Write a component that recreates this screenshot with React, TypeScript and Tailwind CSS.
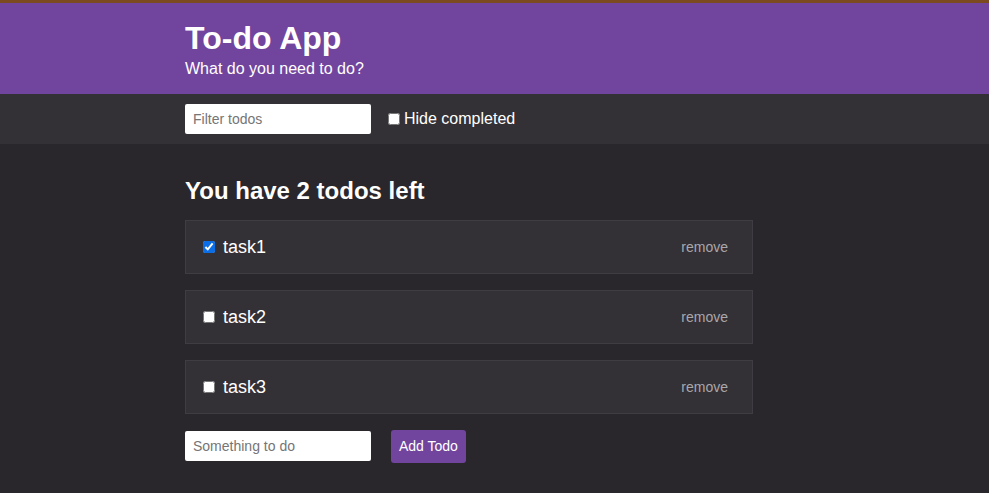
import React, { useState } from 'react';

type Todo = { id: number; text: string; done: boolean };

export default function App() {
  const [todos, setTodos] = useState<Todo[]>([
    { id: 1, text: 'task1', done: true },
    { id: 2, text: 'task2', done: false },
    { id: 3, text: 'task3', done: false },
  ]);
  const [filter, setFilter] = useState('');
  const [hideCompleted, setHideCompleted] = useState(false);
  const [draft, setDraft] = useState('');

  const left = todos.filter(t => !t.done).length;
  const visible = todos.filter(
    t => t.text.includes(filter) && !(hideCompleted && t.done)
  );

  const addTodo = () => {
    if (!draft.trim()) return;
    setTodos([...todos, { id: Date.now(), text: draft, done: false }]);
    setDraft('');
  };

  return (
    <div className="min-h-[493px] bg-[#2a272c] font-['Liberation_Sans',Arial,sans-serif] text-white">
      {/* Header */}
      <div className="border-t-[3px] border-[#7b4a1e] bg-[#71449e] h-[94px]">
        <div className="pl-[185px] pt-[15px]">
          <h1 className="text-[32px] font-bold leading-[40px]">To-do App</h1>
          <p className="text-[16px] leading-[20px] mt-[1px]">What do you need to do?</p>
        </div>
      </div>

      {/* Toolbar */}
      <div className="bg-[#343136] h-[50px] flex items-center pl-[185px] gap-[17px]">
        <input
          className="w-[186px] h-[30px] bg-white rounded-[2px] px-[8px] text-[14px] text-black placeholder:text-[#757575] outline-none"
          placeholder="Filter todos"
          value={filter}
          onChange={e => setFilter(e.target.value)}
        />
        <label className="flex items-center gap-[4px] text-[16px]">
          <input
            type="checkbox"
            className="w-[12px] h-[12px] m-0"
            checked={hideCompleted}
            onChange={e => setHideCompleted(e.target.checked)}
          />
          Hide completed
        </label>
      </div>

      {/* Main */}
      <div className="pl-[185px] pt-[33px]">
        <h2 className="text-[24px] font-bold leading-[28px]">You have {left} todos left</h2>
        <div className="mt-[15px] flex flex-col gap-[16px] w-[568px]">
          {visible.map(t => (
            <div
              key={t.id}
              className="h-[54px] bg-[#343136] border border-[#3f3c43] flex items-center pl-[17px] pr-[24px]"
            >
              <input
                type="checkbox"
                className="w-[12px] h-[12px] m-0 accent-[#0b6ee6]"
                checked={t.done}
                onChange={() =>
                  setTodos(todos.map(x => (x.id === t.id ? { ...x, done: !x.done } : x)))
                }
              />
              <span className="ml-[8px] text-[18px]">{t.text}</span>
              <button
                className="ml-auto text-[14px] text-[#a9a7ab]"
                onClick={() => setTodos(todos.filter(x => x.id !== t.id))}
              >
                remove
              </button>
            </div>
          ))}
        </div>

        <div className="mt-[16px] flex items-start gap-[20px]">
          <input
            className="mt-[1px] w-[186px] h-[30px] bg-white rounded-[2px] px-[8px] text-[14px] text-black placeholder:text-[#757575] outline-none"
            placeholder="Something to do"
            value={draft}
            onChange={e => setDraft(e.target.value)}
          />
          <button
            className="h-[33px] px-[8px] bg-[#71449e] rounded-[3px] text-[14px] text-white"
            onClick={addTodo}
          >
            Add Todo
          </button>
        </div>
      </div>
    </div>
  );
}
